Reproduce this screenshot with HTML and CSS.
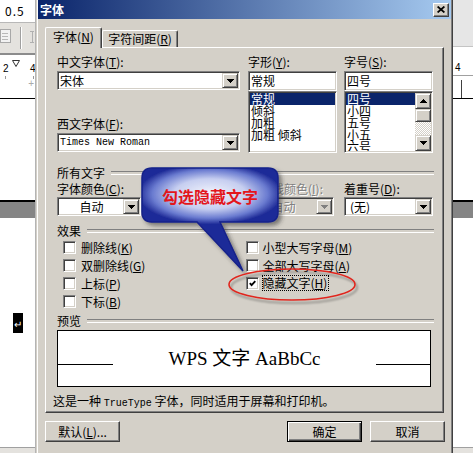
FILE: index.html
```html
<!DOCTYPE html>
<html lang="zh-CN">
<head>
  <meta charset="UTF-8">
  <title>字体</title>
  <link rel="stylesheet" href="styles.css">
</head>
<body>
  <div class="screen">
    <div class="app app-left">
      <div class="app-field">0.5</div>
      <div class="app-toolbar">
        <svg width="35" height="30" viewBox="0 0 35 30">
          <rect x="0.5" y="6.5" width="10" height="13" fill="#f2f2f2" stroke="#a8a8a8"/>
          <path d="M2 10.5h6M2 13.5h6M2 16.5h6" stroke="#b8b8b8"/>
          <path d="M20.5 4v22" stroke="#a0a0a0"/>
          <path d="M21.5 4v22" stroke="#fff"/>
          <path d="M30 8.5h4M32.5 8v12M30 19.5h4" stroke="#b0b0b0"/>
        </svg>
      </div>
      <div class="app-ruler">
        <svg width="35" height="24" viewBox="0 0 35 24">
          <text x="3" y="17" class="ruler-num">2</text>
          <path d="M12.5 5.5h7l-3.5 6z" fill="#fff" stroke="#333"/>
          <text x="30" y="17" class="ruler-num">4</text>
          <path d="M5.5 21v3M33.5 21v3" stroke="#999"/>
        </svg>
      </div>
      <div class="app-page">
        <span class="page-cross">+</span>
        <span class="page-edge"></span>
      </div>
      <div class="app-split"></div>
      <div class="app-lower"><span class="para-mark">↵</span></div>
      <div class="app-status"></div>
    </div>

    <div class="dialog">
      <div class="titlebar">
        <span class="title">字体</span>
        <span class="close">
          <svg width="8" height="7" viewBox="0 0 8 7"><path d="M0.6 0.5L7.4 6.5M7.4 0.5L0.6 6.5" stroke="#000" stroke-width="1.7"/></svg>
        </span>
      </div>

      <div class="dialog-body">
        <div class="tabs">
          <div class="tab active">字体(<u>N</u>)</div>
          <div class="tab">字符间距(<u>R</u>)</div>
        </div>

        <div class="panel">
          <div class="font-row">
            <div class="col-name">
              <div class="label">中文字体(<u>T</u>):</div>
              <div class="combo">
                <span class="combo-text">宋体</span>
                <span class="drop"><svg width="7" height="4" viewBox="0 0 7 4"><path d="M0 0h7v1h-1v1h-1v1h-1v1h-1v-1h-1v-1h-1v-1h-1z"/></svg></span>
              </div>
              <div class="label label-gap">西文字体(<u>F</u>):</div>
              <div class="combo">
                <span class="combo-text mono">Times New Roman</span>
                <span class="drop"><svg width="7" height="4" viewBox="0 0 7 4"><path d="M0 0h7v1h-1v1h-1v1h-1v1h-1v-1h-1v-1h-1v-1h-1z"/></svg></span>
              </div>
            </div>

            <div class="col-style">
              <div class="label">字形(<u>Y</u>):</div>
              <div class="textbox">常规</div>
              <div class="list">
                <div class="item selected">常规</div>
                <div class="item">倾斜</div>
                <div class="item">加粗</div>
                <div class="item">加粗 倾斜</div>
              </div>
            </div>

            <div class="col-size">
              <div class="label">字号(<u>S</u>):</div>
              <div class="textbox">四号</div>
              <div class="list list-scroll">
                <div class="list-items">
                  <div class="item selected">四号</div>
                  <div class="item">小四</div>
                  <div class="item">五号</div>
                  <div class="item">小五</div>
                  <div class="item">六号</div>
                </div>
                <div class="scrollbar">
                  <span class="sb-btn"><svg width="7" height="4" viewBox="0 0 7 4"><path d="M3 0h1v1h1v1h1v1h1v1h-7v-1h1v-1h1v-1h1z"/></svg></span>
                  <span class="sb-thumb"></span>
                  <span class="sb-track"></span>
                  <span class="sb-btn"><svg width="7" height="4" viewBox="0 0 7 4"><path d="M0 0h7v1h-1v1h-1v1h-1v1h-1v-1h-1v-1h-1v-1h-1z"/></svg></span>
                </div>
              </div>
            </div>
          </div>

          <div class="group">所有文字</div>
          <div class="all-row">
            <div class="field f-color">
              <div class="label">字体颜色(<u>C</u>):</div>
              <div class="combo">
                <span class="combo-text center">自动</span>
                <span class="drop"><svg width="7" height="4" viewBox="0 0 7 4"><path d="M0 0h7v1h-1v1h-1v1h-1v1h-1v-1h-1v-1h-1v-1h-1z"/></svg></span>
              </div>
            </div>
            <!-- underline style field: fully covered by the callout -->
            <div class="field f-line">
              <div class="label"></div>
              <div class="combo">
                <span class="combo-text"></span>
                <span class="drop"><svg width="7" height="4" viewBox="0 0 7 4"><path d="M0 0h7v1h-1v1h-1v1h-1v1h-1v-1h-1v-1h-1v-1h-1z"/></svg></span>
              </div>
            </div>
            <div class="field f-ucolor">
              <div class="label disabled">下划线颜色(<u>I</u>):</div>
              <div class="combo disabled">
                <span class="combo-text center">自动</span>
                <span class="drop"><svg width="7" height="4" viewBox="0 0 7 4"><path d="M0 0h7v1h-1v1h-1v1h-1v1h-1v-1h-1v-1h-1v-1h-1z"/></svg></span>
              </div>
            </div>
            <div class="field f-emph">
              <div class="label">着重号(<u>D</u>):</div>
              <div class="combo">
                <span class="combo-text pad">(无)</span>
                <span class="drop"><svg width="7" height="4" viewBox="0 0 7 4"><path d="M0 0h7v1h-1v1h-1v1h-1v1h-1v-1h-1v-1h-1v-1h-1z"/></svg></span>
              </div>
            </div>
          </div>

          <div class="group fx">效果</div>
          <div class="effects">
            <div class="fx-col left">
              <div class="check"><span class="box"></span>删除线(<u>K</u>)</div>
              <div class="check"><span class="box"></span>双删除线(<u>G</u>)</div>
              <div class="check"><span class="box"></span>上标(<u>P</u>)</div>
              <div class="check"><span class="box"></span>下标(<u>B</u>)</div>
            </div>
            <div class="fx-col right">
              <div class="check"><span class="box"></span>小型大写字母(<u>M</u>)</div>
              <div class="check"><span class="box"></span>全部大写字母(<u>A</u>)</div>
              <div class="check">
                <span class="box"><svg width="7" height="7" viewBox="0 0 7 7"><path d="M0.8 3.2L2.6 5.2L6.3 1.2" fill="none" stroke="#000" stroke-width="1.8"/></svg></span>
                <span class="focus">隐藏文字(<u>H</u>)</span>
              </div>
            </div>
          </div>

          <div class="group pv">预览</div>
          <div class="preview">
            <span class="pv-line"></span>
            <span class="pv-text">WPS 文字 AaBbCc</span>
            <span class="pv-line end"></span>
          </div>
          <div class="note">这是一种 <span class="mono">TrueType</span> 字体，同时适用于屏幕和打印机。</div>
        </div>

        <div class="buttons">
          <div class="btn">默认(<u>L</u>)...</div>
          <div class="btn default">确定</div>
          <div class="btn cancel">取消</div>
        </div>
      </div>
    </div>

    <div class="app app-right">
      <div class="app-tools"></div>
      <div class="app-ruler-r">4</div>
      <div class="app-page-r"><span class="r-tick"></span></div>
      <div class="app-page-r2"></div>
      <div class="app-split"></div>
      <div class="app-lower"></div>
      <div class="app-status"></div>
    </div>

    <!-- annotation drawn over the screenshot -->
    <svg class="callout" width="160" height="120" viewBox="0 0 160 120">
      <defs>
        <radialGradient id="bubble" gradientUnits="userSpaceOnUse" cx="76" cy="34" r="72" gradientTransform="translate(76 34) scale(1 0.42) translate(-76 -34)">
          <stop offset="0" stop-color="#f4f6fd"/>
          <stop offset="0.5" stop-color="#c6cef0"/>
          <stop offset="0.8" stop-color="#6a7bd0"/>
          <stop offset="1" stop-color="#1f2c98"/>
        </radialGradient>
        <filter id="shade" x="-10%" y="-10%" width="130%" height="130%">
          <feDropShadow dx="3" dy="3" stdDeviation="2" flood-color="#333" flood-opacity="0.55"/>
        </filter>
      </defs>
      <path d="M18 8H134Q144 8 144 18V52Q144 62 134 62H86L109 111L63 62H18Q8 62 8 52V18Q8 8 18 8Z" fill="url(#bubble)" stroke="#14208a" stroke-width="1.5" filter="url(#shade)"/>
      <text x="76" y="43" text-anchor="middle" class="callout-text">勾选隐藏文字</text>
    </svg>

    <svg class="ring" width="144" height="48" viewBox="0 0 144 48">
      <defs>
        <filter id="ring-shade" x="-10%" y="-30%" width="120%" height="170%">
          <feDropShadow dx="2" dy="3" stdDeviation="1.2" flood-color="#000" flood-opacity="0.35"/>
        </filter>
      </defs>
      <ellipse cx="70" cy="22.5" rx="63" ry="15.5" fill="none" stroke="#e0261f" stroke-width="1.6" filter="url(#ring-shade)"/>
    </svg>
  </div>
</body>
</html>
```

FILE: styles.css
```css
* {
  margin: 0;
  padding: 0;
  box-sizing: border-box;
}

body {
  font-family: "Noto Sans CJK SC", sans-serif;
  font-size: 12px;
  color: #000;
  background: #fff;
}

u {
  text-decoration: underline;
  text-underline-offset: 1px;
}

.screen {
  position: relative;
  display: flex;
  width: 473px;
  height: 453px;
  overflow: hidden;
}

/* document window behind the dialog */
.app {
  display: flex;
  flex-direction: column;
  background: #fff;
}

.app-left {
  width: 36px;
  border-right: 1px solid #b4b4b4;
}

.app-right {
  width: 20px;
}

.app-field {
  height: 23px;
  padding-left: 5px;
  border-bottom: 1px solid #b8b8b8;
  line-height: 22px;
  letter-spacing: 1px;
}

.app-toolbar {
  height: 30px;
  background: #e4e2de;
}

.app-toolbar svg,
.app-ruler svg {
  display: block;
}

.app-ruler {
  height: 26px;
  border-top: 2px solid #8c8c8c;
}

.ruler-num {
  font: 10px "Liberation Sans", sans-serif;
  fill: #000;
}

.app-page {
  height: 121px;
}

.page-cross {
  display: block;
  height: 10px;
  padding-right: 1px;
  text-align: right;
  font: 10px/10px "Liberation Sans", sans-serif;
  color: #aaa;
}

.page-edge {
  display: block;
  height: 1px;
  margin-top: 9px;
  background: #000;
}

.app-split {
  height: 18px;
  border-top: 2px solid #000;
  background: #858585;
}

.app-lower {
  height: 229px;
}

.para-mark {
  display: flex;
  align-items: center;
  justify-content: center;
  width: 10px;
  height: 20px;
  margin: 95px 0 0 13px;
  background: #000;
  color: #fff;
  font-size: 10px;
}

.app-status {
  flex: 1;
  border-top: 1px solid #a0a0a0;
  background: #e4e2de;
}

.app-tools {
  height: 47px;
  border-bottom: 1px solid #c4c4c4;
  background: #e6e6e6;
}

.app-ruler-r {
  height: 29px;
  padding: 15px 0 0 2px;
  border-bottom: 1px solid #a0a0a0;
  font: 10px/12px "Liberation Sans", sans-serif;
}

.app-page-r {
  height: 23px;
  padding: 4px 0 0 8px;
  border-bottom: 1px solid #000;
}

.r-tick {
  display: block;
  width: 1px;
  height: 18px;
  background: #404040;
}

.app-page-r2 {
  height: 101px;
}

/* dialog window */
.dialog {
  width: 417px;
  padding: 0 1px;
  border-left: 1px solid #d4d0c8;
  border-right: 1px solid #404040;
  box-shadow: inset 1px 0 #fff, inset -1px 0 #808080;
  background: #d4d0c8;
}

.titlebar {
  display: flex;
  align-items: center;
  justify-content: space-between;
  height: 19px;
  padding: 0 2px;
  background: linear-gradient(to right, #0a246a, #a6caf0);
  color: #fff;
}

.title {
  font-weight: bold;
  line-height: 19px;
}

.close {
  display: flex;
  align-items: center;
  justify-content: center;
  width: 16px;
  height: 14px;
  border: 1px solid;
  border-color: #fff #404040 #404040 #fff;
  box-shadow: inset -1px -1px #808080;
  background: #d4d0c8;
}

.dialog-body {
  padding: 8px 7px 0;
}

.tabs {
  position: relative;
  z-index: 1;
  display: flex;
  align-items: flex-end;
  height: 20px;
}

.tab {
  width: 76px;
  height: 17px;
  border: 1px solid;
  border-bottom: 0;
  border-color: #fff #404040 #fff #fff;
  border-radius: 2px 2px 0 0;
  box-shadow: inset -1px 0 #808080;
  text-align: center;
  line-height: 16px;
  white-space: nowrap;
}

.tab.active {
  width: 57px;
  height: 21px;
  margin-bottom: -1px;
  background: #d4d0c8;
  line-height: 18px;
}

.panel {
  height: 366px;
  padding: 7px 9px 0 11px;
  border: 1px solid;
  border-color: #fff #404040 #404040 #fff;
  box-shadow: inset -1px -1px #808080;
}

.font-row {
  display: flex;
  height: 98px;
}

.col-name {
  width: 183px;
}

.col-style {
  width: 89px;
  margin-left: 8px;
}

.col-size {
  width: 89px;
  margin-left: 7px;
}

.label {
  height: 14px;
  line-height: 14px;
  white-space: nowrap;
}

.label-gap {
  margin-top: 27px;
}

.label.disabled {
  color: #808080;
  text-shadow: 1px 1px #fff;
}

.combo {
  display: flex;
  height: 19px;
  margin-top: 2px;
  padding: 1px;
  border: 1px solid;
  border-color: #808080 #fff #fff #808080;
  box-shadow: inset 1px 1px #404040, inset -1px -1px #d4d0c8;
  background: #fff;
}

.combo-text {
  flex: 1;
  padding-left: 1px;
  overflow: hidden;
  line-height: 15px;
  white-space: nowrap;
}

.combo-text.center {
  text-align: center;
}

.combo-text.pad {
  padding-left: 4px;
}

.combo.disabled {
  background: #d4d0c8;
}

.combo.disabled .combo-text {
  color: #808080;
  text-shadow: 1px 1px #fff;
}

.combo.disabled .drop svg {
  fill: #808080;
}

.drop,
.sb-btn {
  display: flex;
  align-items: center;
  justify-content: center;
  width: 16px;
  height: 15px;
  border: 1px solid;
  border-color: #d4d0c8 #404040 #404040 #d4d0c8;
  box-shadow: inset 1px 1px #fff, inset -1px -1px #808080;
  background: #d4d0c8;
}

.mono {
  font-family: "Liberation Mono", monospace;
  font-size: 10px;
}

.textbox {
  height: 20px;
  margin-top: 2px;
  padding: 1px 2px;
  border: 1px solid;
  border-color: #808080 #fff #fff #808080;
  box-shadow: inset 1px 1px #404040, inset -1px -1px #d4d0c8;
  background: #fff;
  line-height: 16px;
}

.list {
  height: 62px;
  padding: 1px;
  overflow: hidden;
  border: 1px solid;
  border-color: #808080 #fff #fff #808080;
  box-shadow: inset 1px 1px #404040, inset -1px -1px #d4d0c8;
  background: #fff;
}

.item {
  height: 12px;
  padding-left: 1px;
  line-height: 12px;
  white-space: nowrap;
}

.item.selected {
  background: #0a246a;
  color: #fff;
}

.list-scroll {
  display: flex;
}

.list-items {
  flex: 1;
  overflow: hidden;
}

.scrollbar {
  display: flex;
  flex-direction: column;
  width: 16px;
}

.sb-btn {
  height: 16px;
}

.sb-thumb {
  height: 13px;
  border: 1px solid;
  border-color: #d4d0c8 #404040 #404040 #d4d0c8;
  box-shadow: inset 1px 1px #fff, inset -1px -1px #808080;
  background: #d4d0c8;
}

.sb-track {
  flex: 1;
  background: repeating-conic-gradient(#fff 0 25%, #d4d0c8 0 50%) 0 0 / 2px 2px;
}

.group {
  display: flex;
  align-items: center;
  height: 14px;
  margin-top: 13px;
  line-height: 14px;
}

.group::after {
  content: "";
  flex: 1;
  height: 2px;
  margin-left: 6px;
  border-top: 1px solid #808080;
  border-bottom: 1px solid #fff;
}

.group.fx {
  margin-top: 8px;
}

.group.pv {
  margin-top: 4px;
}

.all-row {
  display: flex;
  margin-top: 2px;
}

.field .combo {
  margin-top: 1px;
}

.f-color {
  width: 84px;
}

.f-line {
  width: 92px;
  margin-left: 7px;
}

.f-ucolor {
  width: 86px;
  margin-left: 8px;
}

.f-emph {
  width: 89px;
  margin-left: 10px;
}

.effects {
  display: flex;
}

.fx-col {
  width: 191px;
}

.fx-col.left {
  padding-left: 6px;
}

.check {
  display: flex;
  align-items: center;
  height: 18px;
  white-space: nowrap;
}

.box {
  display: flex;
  align-items: center;
  justify-content: center;
  width: 13px;
  height: 13px;
  margin-right: 5px;
  border: 1px solid;
  border-color: #808080 #fff #fff #808080;
  box-shadow: inset 1px 1px #404040, inset -1px -1px #d4d0c8;
  background: #fff;
}

.fx-col.right .box {
  margin-right: 4px;
}

.focus {
  margin-left: -1px;
  padding-right: 1px;
  border: 1px dotted #000;
  line-height: 14px;
}

.preview {
  display: flex;
  align-items: flex-start;
  width: 374px;
  height: 57px;
  margin-top: 2px;
  border: 1px solid #000;
  background: #fff;
}

.pv-line {
  width: 55px;
  height: 1px;
  margin-top: 33px;
  background: #000;
}

.pv-line.end {
  width: 54px;
}

.pv-text {
  flex: 1;
  margin-top: 18px;
  text-align: center;
  font: 19px/20px "Liberation Serif", "Noto Sans CJK SC", serif;
  white-space: nowrap;
}

.note {
  height: 14px;
  margin: 7px 0 0 -4px;
  line-height: 14px;
  white-space: nowrap;
}

.buttons {
  display: flex;
  height: 21px;
  margin: 8px -1px 0 0;
}

.btn {
  width: 75px;
  height: 21px;
  border: 1px solid;
  border-color: #fff #404040 #404040 #fff;
  box-shadow: inset -1px -1px #808080;
  text-align: center;
  line-height: 19px;
  white-space: nowrap;
}

.btn.default {
  margin-left: auto;
  border-color: #000;
  box-shadow: inset 1px 1px #fff, inset -1px -1px #404040, inset -2px -2px #808080;
}

.btn.cancel {
  margin-left: 8px;
}

/* annotation overlays */
.callout {
  position: absolute;
  left: 134px;
  top: 160px;
}

.callout-text {
  font: bold 16px "Noto Sans CJK SC", sans-serif;
  fill: #e3161c;
}

.ring {
  position: absolute;
  left: 222px;
  top: 262px;
}
```
